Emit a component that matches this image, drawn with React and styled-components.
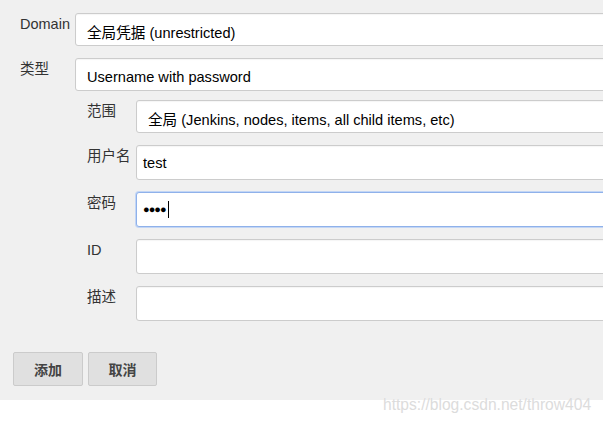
import styled, { createGlobalStyle } from "styled-components";

const GlobalStyle = createGlobalStyle`
  body {
    margin: 0;
    background: #fff;
    font-family: "Liberation Sans", Arial, "Noto Sans CJK SC", sans-serif;
  }
`;

const Screen = styled.div`
  position: relative;
  width: 603px;
  height: 423px;
  overflow: hidden;
  background: #fff;
`;

const Panel = styled.div`
  background: #f0f0f0;
  height: 400px;
  padding-top: 13px;
  box-sizing: border-box;
  display: flex;
  flex-direction: column;
`;

const Row = styled.div`
  display: grid;
  grid-template-columns: ${({ $label }) => $label}px 1fr;
  padding-left: ${({ $indent }) => $indent}px;
  margin-bottom: ${({ $gap }) => $gap}px;
`;

const Label = styled.div`
  color: #333;
  font-size: 14.5px;
  line-height: 18px;
  padding-top: 2px;
  white-space: nowrap;
`;

const Field = styled.div`
  width: calc(100% + 20px);
  height: ${({ $h }) => $h}px;
  box-sizing: border-box;
  display: flex;
  align-items: center;
  background: #fff;
  border: 1px solid ${({ $focus }) => ($focus ? "#8fb1ea" : "#ccc")};
  box-shadow: ${({ $focus }) =>
    $focus ? "0 0 0 1px #c3d6f5" : "inset 0 1px 1px rgba(0,0,0,0.04)"};
  border-radius: 3px;
  padding-left: ${({ $pad }) => $pad}px;
  padding-top: ${({ $select }) => ($select ? 4 : 0)}px;
  color: #000;
  font-size: 14.6px;
  white-space: nowrap;
`;

const Dots = styled.span`
  font-size: 11px;
  letter-spacing: -1px;
  line-height: 1;
`;

const Caret = styled.span`
  display: inline-block;
  width: 1px;
  height: 17px;
  background: #000;
  margin-left: 2px;
`;

const Actions = styled.div`
  display: flex;
  gap: 5px;
  padding-left: 13px;
  margin-top: 31px;
`;

const Button = styled.button`
  width: ${({ $w }) => $w}px;
  height: 34px;
  background: #e0e0e0;
  border: 1px solid #cbcbcb;
  border-radius: 2px;
  color: #444;
  font-family: "Noto Sans CJK SC", sans-serif;
  font-weight: 600;
  font-size: 14px;
  padding: 0;
`;

const Watermark = styled.div`
  position: absolute;
  left: 383px;
  top: 396px;
  font-size: 15.6px;
  color: #dcdcdc;
  text-shadow: 0 0 1px rgba(255, 255, 255, 0.6);
`;

export default function App() {
  return (
    <Screen>
      <GlobalStyle />
      <Panel>
        <Row $indent={20} $label={55} $gap={12}>
          <Label>Domain</Label>
          <Field $h={33} $pad={11} $select>
            全局凭据 (unrestricted)
          </Field>
        </Row>
        <Row $indent={20} $label={55} $gap={9}>
          <Label>类型</Label>
          <Field $h={33} $pad={11} $select>
            Username with password
          </Field>
        </Row>
        <Row $indent={87} $label={49} $gap={12}>
          <Label>范围</Label>
          <Field $h={33} $pad={11} $select>
            全局 (Jenkins, nodes, items, all child items, etc)
          </Field>
        </Row>
        <Row $indent={87} $label={49} $gap={12}>
          <Label>用户名</Label>
          <Field $h={35} $pad={6}>
            test
          </Field>
        </Row>
        <Row $indent={87} $label={49} $gap={12}>
          <Label>密码</Label>
          <Field $h={35} $pad={6} $focus>
            <Dots>●●●●</Dots>
            <Caret />
          </Field>
        </Row>
        <Row $indent={87} $label={49} $gap={12}>
          <Label>ID</Label>
          <Field $h={35} $pad={6} />
        </Row>
        <Row $indent={87} $label={49} $gap={0}>
          <Label>描述</Label>
          <Field $h={35} $pad={6} />
        </Row>
        <Actions>
          <Button $w={70}>添加</Button>
          <Button $w={69}>取消</Button>
        </Actions>
      </Panel>
      <Watermark>https://blog.csdn.net/throw404</Watermark>
    </Screen>
  );
}
